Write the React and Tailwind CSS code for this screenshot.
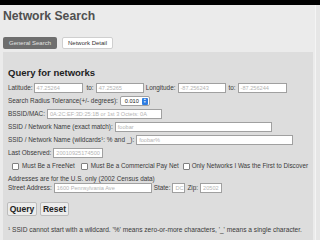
export default function App() {
  const input = 'h-[10px] border border-[#a0a0a0] bg-white text-[#b4b4b4] text-[5.6px] leading-[8px] px-[2px] overflow-hidden whitespace-nowrap'
  const box = 'w-[7px] h-[7px] bg-white border border-[#808080] rounded-[1px]'
  return (
    <div className="w-[320px] h-[240px] overflow-hidden bg-black font-['Liberation_Sans',Arial,sans-serif] text-[#3a3a3a]">
      <div className="mt-[5px] h-[235px] bg-[#ebebeb] flex">
        <div className="flex-1 flex flex-col pl-[3px] pr-[2px]">
          <h1 className="text-[12.2px] leading-[14px] font-bold text-[#505050] mt-[4px]">Network Search</h1>
          <div className="flex gap-[5px] mt-[14px]">
            <div className="h-[12px] w-[54px] rounded-[2px] bg-[#6e6e6e] text-[#e2e2e2] text-[6px] leading-[12px] text-center">General Search</div>
            <div className="h-[12px] w-[51px] rounded-[2px] bg-white border border-[#cfcfcf] text-[#333] text-[6px] leading-[10px] text-center">Network Detail</div>
          </div>
          <div className="mt-[3px] flex-1 bg-[#dddddd] pl-[5px] pt-[15px] text-[6.4px] leading-[8px] whitespace-nowrap">
            <h2 className="text-[9.5px] leading-[12px] font-bold text-[#222]">Query for networks</h2>
            <div className="flex items-center h-[10px] mt-[4px]">
              <span className="mr-[1px]">Latitude:</span>
              <div className={input + ' w-[49px]'}>47.25264</div>
              <span className="ml-[4px] mr-[2px]">to:</span>
              <div className={input + ' w-[48px]'}>47.25265</div>
              <span className="ml-[2px] mr-[2px]">Longitude:</span>
              <div className={input + ' w-[48px]'}>-87.256243</div>
              <span className="ml-[3px] mr-[2px]">to:</span>
              <div className={input + ' w-[49px]'}>-87.256244</div>
            </div>
            <div className="flex items-center h-[10px] mt-[3px]">
              <span className="mr-[2px]">Search Radius Tolerance(+/- degrees):</span>
              <div className="h-[10px] w-[30px] bg-white border border-[#a0a0a0] rounded-[2px] flex items-center justify-between pl-[4px] pr-[1px] text-[5.6px] text-[#222]">
                <span>0.010</span>
                <span className="w-[6px] h-[7px] bg-[#2f7de1] rounded-[1px] flex flex-col items-center justify-center text-white text-[3px] leading-[3px]">
                  <span>▲</span><span>▼</span>
                </span>
              </div>
            </div>
            <div className="flex items-center h-[10px] mt-[3px]">
              <span className="mr-[2px]">BSSID/MAC:</span>
              <div className={input + ' w-[115px]'}>0A:2C:EF:3D:25:1B or 1st 3 Octets: 0A</div>
            </div>
            <div className="flex items-center h-[10px] mt-[3px]">
              <span className="mr-[2px]">SSID / Network Name (exact match):</span>
              <div className={input + ' w-[157px]'}>foobar</div>
            </div>
            <div className="flex items-center h-[10px] mt-[3px]">
              <span className="mr-[2px]">SSID / Network Name (wildcards<sup className="text-[4px]">1</sup>: % and _):</span>
              <div className={input + ' w-[157px]'}>foobar%</div>
            </div>
            <div className="flex items-center h-[10px] mt-[3px]">
              <span className="mr-[2px]">Last Observed:</span>
              <div className={input + ' w-[50px]'}>20010925174500</div>
            </div>
            <div className="flex items-center h-[10px] mt-[3px] text-[6.3px]">
              <span className={box + ' ml-[4px] mr-[3px]'}></span>
              <span>Must Be a FreeNet</span>
              <span className={box + ' ml-[6px] mr-[3px]'}></span>
              <span>Must Be a Commercial Pay Net</span>
              <span className={box + ' ml-[4px] mr-[2px]'}></span>
              <span>Only Networks I Was the First to Discover</span>
            </div>
            <div className="mt-[4px] h-[8px]">Addresses are for the U.S. only (2002 Census data)</div>
            <div className="flex items-center h-[10px]">
              <span className="mr-[2px]">Street Address:</span>
              <div className={input + ' w-[98px]'}>1600 Pennsylvania Ave</div>
              <span className="ml-[2px] mr-[2px]">State:</span>
              <div className={input + ' w-[13px]'}>DC</div>
              <span className="ml-[2px] mr-[2px]">Zip:</span>
              <div className={input + ' w-[22px]'}>20502</div>
            </div>
            <div className="flex gap-[3px] mt-[9px] ml-[-1px]">
              <div className="h-[14px] w-[30px] bg-[#ececec] border border-[#bcbcbc] rounded-[2px] text-[8.5px] font-bold leading-[12px] text-center text-[#222]">Query</div>
              <div className="h-[14px] w-[29px] bg-[#ececec] border border-[#bcbcbc] rounded-[2px] text-[8.5px] font-bold leading-[12px] text-center text-[#222]">Reset</div>
            </div>
            <div className="mt-[10px] text-[6.6px]"><sup className="text-[4px]">1</sup> SSID cannot start with a wildcard. '%' means zero-or-more characters, '_' means a single character.</div>
          </div>
        </div>
        <div className="w-[5px] bg-[#e6e6e6] border-l border-[#f4f4f4]"></div>
      </div>
    </div>
  )
}
